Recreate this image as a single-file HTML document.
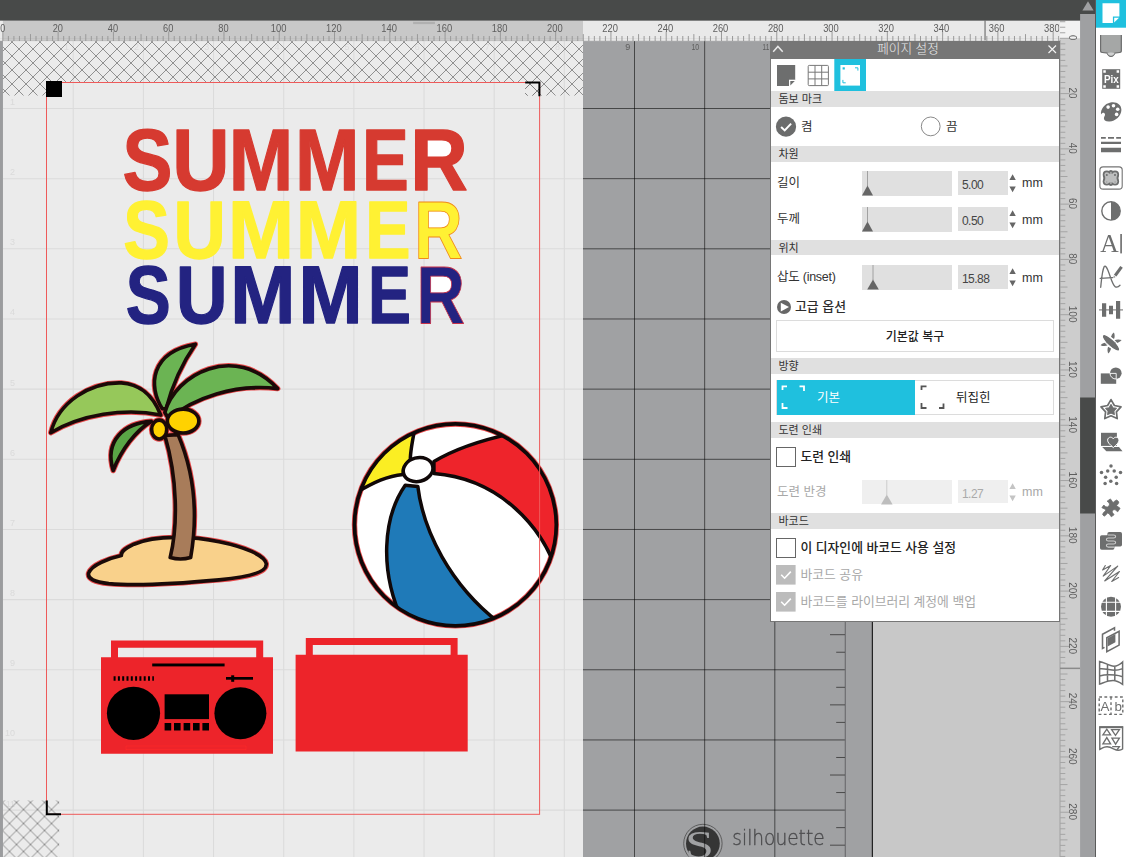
<!DOCTYPE html>
<html lang="ko"><head><meta charset="utf-8"><title>Silhouette Studio - 페이지 설정</title>
<style>
html,body{margin:0;padding:0;background:#c8c8c8;}
body{width:1126px;height:857px;overflow:hidden;position:relative;font-family:"Liberation Sans","Noto Sans CJK KR",sans-serif;}
#cv{position:absolute;left:0;top:0;will-change:transform;}
#tb{position:absolute;left:1096px;top:0;width:30px;height:857px;background:#fff;will-change:transform;}
#pn{position:absolute;left:770px;top:41px;width:288px;height:580px;background:#fff;border:1px solid #767676;border-top:none;font-size:12px;color:#333;}
#pn .ti{position:absolute;left:-1px;top:0;width:276px;height:17.5px;background:#767676;color:#ededed;font-size:12.6px;line-height:17px;text-align:center;font-weight:300;padding-right:14px;}
#pn .hd{position:absolute;left:0;width:288px;height:15.6px;background:#e0e0e0;font-size:11px;line-height:17px;color:#333;padding-left:7.5px;box-sizing:border-box;}
#pn .lb{position:absolute;left:6px;height:20px;line-height:20px;font-size:12.5px;white-space:nowrap;}
#pn .sl{position:absolute;left:91px;width:90px;height:24.6px;background:#e0e0e0;}
#pn .in{position:absolute;left:187px;width:50px;height:23.6px;background:#e0e0e0;font-size:12px;line-height:28px;padding-left:4px;box-sizing:border-box;color:#444;letter-spacing:-0.55px;}
#pn .mm{position:absolute;left:251px;font-size:12.5px;line-height:20px;height:20px;}
#pn .cb{position:absolute;left:5px;width:18px;height:18px;border:1px solid #666;background:#fff;}
#pn .dis{color:#a8a8a8;}
#pn svg{position:absolute;overflow:visible;}
</style></head><body>
<svg id="cv" width="1096" height="857" viewBox="0 0 1096 857" font-family="'Liberation Sans',sans-serif">
<defs>
<pattern id="h1" x="5" y="0" width="14" height="14" patternUnits="userSpaceOnUse"><path d="M0,7 L7,14 L14,7 L7,0 Z" fill="none" stroke="#787878" stroke-width="0.8"/></pattern>
<pattern id="h2" x="2.5" y="-2.5" width="14" height="14" patternUnits="userSpaceOnUse"><path d="M0,7 L7,14 L14,7 L7,0 Z" fill="none" stroke="#787878" stroke-width="0.8"/></pattern>
</defs>
<rect x="0" y="0" width="1096" height="857" fill="#c8c8c8"/>
<rect x="0" y="21" width="872" height="836" fill="#a0a1a3"/>
<rect x="871.8" y="21" width="1.1" height="836" fill="#111"/>
<g>
<circle cx="702.9" cy="843.5" r="19.2" fill="none" stroke="#4a4a4a" stroke-width="0.8"/>
<circle cx="702.9" cy="843.5" r="16.9" fill="#353535"/>
<text transform="translate(699.5,857.5) scale(1.3,1)" font-family="'Liberation Serif',serif" font-size="40" fill="#a0a1a3" text-anchor="middle">S</text>
<text x="732.3" y="844.8" font-family="'DejaVu Sans','Liberation Sans',sans-serif" font-weight="200" font-size="20.4" fill="#4a4a4c" stroke="#4a4a4c" stroke-width="0.35" textLength="92.3" lengthAdjust="spacingAndGlyphs">silhouette</text>
</g>
<path d="M634.5,40 V857 M704.66,40 V857 M774.82,40 V857" stroke="#000" stroke-width="1" fill="none" opacity="0.56"/>
<path d="M583,108.5 H845.3 M583,178.66 H845.3 M583,248.82 H845.3 M583,318.98 H845.3 M583,389.14 H845.3 M583,459.3 H845.3 M583,529.46 H845.3 M583,599.62 H845.3 M583,669.78 H845.3 M583,739.94 H845.3 M583,810.1 H845.3 M583,880.26 H845.3" stroke="#000" stroke-width="1" fill="none" opacity="0.56"/>
<path d="M845.3,40 V857" stroke="#6e6e70" stroke-width="1.2" fill="none"/>
<path d="M836.2,55.88 H845 M830,73.42 H845 M836.2,90.96 H845 M836.2,126.04 H845 M830,143.58 H845 M836.2,161.12 H845 M836.2,196.2 H845 M830,213.74 H845 M836.2,231.28 H845 M836.2,266.36 H845 M830,283.9 H845 M836.2,301.44 H845 M836.2,336.52 H845 M830,354.06 H845 M836.2,371.6 H845 M836.2,406.68 H845 M830,424.22 H845 M836.2,441.76 H845 M836.2,476.84 H845 M830,494.38 H845 M836.2,511.92 H845 M836.2,547 H845 M830,564.54 H845 M836.2,582.08 H845 M836.2,617.16 H845 M830,634.7 H845 M836.2,652.24 H845 M836.2,687.32 H845 M830,704.86 H845 M836.2,722.4 H845 M836.2,757.48 H845 M830,775.02 H845 M836.2,792.56 H845 M836.2,827.64 H845 M830,845.18 H845 M836.2,862.72 H845 M836.2,897.8 H845 M830,915.34 H845 M836.2,932.88 H845" stroke="#4a4a4a" stroke-width="1" fill="none"/>
<g font-size="9" fill="#5e5e5e" text-anchor="end"><text x="630.3" y="49.7">9</text><text x="699.2" y="49.7" textLength="7.8" lengthAdjust="spacingAndGlyphs">10</text><text x="769.2" y="49.7" textLength="6.6" lengthAdjust="spacingAndGlyphs">11</text></g>
<rect x="2.85" y="38.3" width="580.15" height="830" fill="#ebebeb"/>
<path d="M73.22,40 V857 M143.38,40 V857 M213.54,40 V857 M283.7,40 V857 M353.86,40 V857 M424.02,40 V857 M494.18,40 V857 M564.34,40 V857 M2.85,108.5 H583 M2.85,178.66 H583 M2.85,248.82 H583 M2.85,318.98 H583 M2.85,389.14 H583 M2.85,459.3 H583 M2.85,529.46 H583 M2.85,599.62 H583 M2.85,669.78 H583 M2.85,739.94 H583 M2.85,810.1 H583 M2.85,880.26 H583" stroke="#dbdbdb" stroke-width="1.05" fill="none"/>
<g font-size="9" fill="#dadada" text-anchor="end"><text x="68.92" y="49.7">1</text><text x="139.08" y="49.7">2</text><text x="209.24" y="49.7">3</text><text x="279.4" y="49.7">4</text><text x="349.56" y="49.7">5</text><text x="419.72" y="49.7">6</text><text x="489.88" y="49.7">7</text><text x="560.04" y="49.7">8</text><text x="15" y="105">1</text><text x="15" y="175.16">2</text><text x="15" y="245.32">3</text><text x="15" y="315.48">4</text><text x="15" y="385.64">5</text><text x="15" y="455.8">6</text><text x="15" y="525.96">7</text><text x="15" y="596.12">8</text><text x="15" y="666.28">9</text><text x="15" y="736.44">10</text><text x="15" y="806.6">11</text></g>
<path d="M2.7,41 H583 V95.6 H539.6 V82.5 H525.2 V95.6 H539.6 V82.5 H62 V95.6 H46.5 V95.6 H2.7 Z" fill="url(#h1)"/>
<path d="M525.2,82.5 H539.6 V95.6 H525.2 Z" fill="url(#h1)"/>
<rect x="2.7" y="800.4" width="56.5" height="57" fill="url(#h2)"/>
<g font-family="'Liberation Sans',sans-serif" font-weight="bold">
<rect x="423.77" y="135.91" width="31.11" height="24.25" fill="#fff"/><text aria-label="SUMMER" y="189.6" font-size="86.6" fill="#d63a30" stroke="#d63a30" stroke-width="1.3" stroke-linejoin="round"><tspan x="122.43" textLength="49.91" lengthAdjust="spacingAndGlyphs">S</tspan><tspan x="172.29" textLength="57.28" lengthAdjust="spacingAndGlyphs">U</tspan><tspan x="228.77" textLength="64.44" lengthAdjust="spacingAndGlyphs">M</tspan><tspan x="294.97" textLength="64.44" lengthAdjust="spacingAndGlyphs">M</tspan><tspan x="361.95" textLength="46.81" lengthAdjust="spacingAndGlyphs">E</tspan><tspan x="410.2" textLength="57.6" lengthAdjust="spacingAndGlyphs">R</tspan></text>
<rect x="425.67" y="207.98" width="26.18" height="22.68" fill="#fff"/><text aria-label="SUMMER" y="258.2" font-size="81" fill="#fff133" stroke="#fff133" stroke-width="1.3" stroke-linejoin="round"><tspan x="123.22" textLength="46.62" lengthAdjust="spacingAndGlyphs">S</tspan><tspan x="173.6" textLength="52.34" lengthAdjust="spacingAndGlyphs">U</tspan><tspan x="227.94" textLength="66" lengthAdjust="spacingAndGlyphs">M</tspan><tspan x="295.8" textLength="65.28" lengthAdjust="spacingAndGlyphs">M</tspan><tspan x="365.3" textLength="45.26" lengthAdjust="spacingAndGlyphs">E</tspan><tspan x="414.25" textLength="48.48" lengthAdjust="spacingAndGlyphs" stroke="#f08a1c" stroke-width="0.9">R</tspan></text>
<rect x="427.87" y="272.38" width="26.18" height="22.68" fill="#fff"/><text aria-label="SUMMER" y="322.6" font-size="81" fill="#232381" stroke="#232381" stroke-width="1.3" stroke-linejoin="round"><tspan x="125.8" textLength="44.95" lengthAdjust="spacingAndGlyphs">S</tspan><tspan x="175.97" textLength="51.5" lengthAdjust="spacingAndGlyphs">U</tspan><tspan x="230.31" textLength="65.16" lengthAdjust="spacingAndGlyphs">M</tspan><tspan x="298.5" textLength="64.09" lengthAdjust="spacingAndGlyphs">M</tspan><tspan x="368.03" textLength="43" lengthAdjust="spacingAndGlyphs">E</tspan><tspan x="416.45" textLength="48.48" lengthAdjust="spacingAndGlyphs" stroke="#c8324a" stroke-width="0.9">R</tspan></text>
</g>

<!-- palm tree -->
<defs><g id="palm">
<path d="M186,772 C195,745 250,725 290,716 C288,700 310,690 330,680 C400,650 520,655 600,672 C680,688 745,715 750,742 C752,770 690,785 600,793 C470,805 330,812 250,805 C205,800 182,790 186,772 Z" fill="#f9d18b"/>
<path d="M445,722 C470,620 468,470 428,335 L470,332 C520,450 535,580 510,722 C490,728 465,728 445,722 Z" fill="#a87c5a"/>
<path d="M66,326 C90,230 190,165 290,168 C340,172 385,195 415,270 C300,245 160,270 66,326 Z" fill="#96c85a"/>
<path d="M385,290 C300,295 235,350 264,446 C290,380 335,320 385,290 Z" fill="#5aa646"/>
<path d="M420,250 C375,180 380,70 525,45 C480,110 450,180 432,250 Z" fill="#6bb453"/>
<path d="M428,262 C460,140 650,40 786,186 C650,170 520,215 440,282 Z" fill="#6bb453"/>
<ellipse cx="486" cy="289" rx="50" ry="38" fill="#ffd200"/>
<ellipse cx="410" cy="316" rx="24" ry="30" fill="#ffd200"/>
</g></defs>
<g transform="translate(30,330) scale(0.31505)" stroke-linejoin="round" stroke-linecap="round">
<use href="#palm" stroke="#e8484a" stroke-width="17.5"/>
<use href="#palm" stroke="#1a0a08" stroke-width="11.5"/>
</g>
<!-- beach ball -->
<clipPath id="bc"><circle cx="430" cy="428" r="376"/></clipPath>
<g transform="translate(340,410) scale(0.26838)" stroke="#100808" stroke-width="13" stroke-linejoin="round">
<circle cx="430" cy="428" r="376" fill="#fff" stroke="#e8484a" stroke-width="20"/>
<g clip-path="url(#bc)">
<path d="M40,320 L20,60 L285,40 C270,110 262,150 262,185 C245,200 235,220 235,240 C180,245 130,265 40,320 Z" fill="#fbee23"/>
<path d="M350,192 C420,150 500,118 640,88 L860,120 L820,640 C760,420 580,255 350,237 Z" fill="#ee242b"/>
<path d="M243,280 C160,400 145,600 235,790 L600,840 L590,790 C410,650 310,450 290,285 Z" fill="#1f7ab8"/>
</g>
<circle cx="430" cy="428" r="376" fill="none" stroke-width="14"/>
<ellipse cx="291" cy="222" rx="56" ry="44" transform="rotate(-15 291 222)" fill="#fff"/>
</g>
<!-- boombox 1 -->
<g fill="#ed242a">
<path d="M111,640.6 H263.2 V657.3 H273 V753.8 H101 V657.3 H111 Z M118,647.7 V657.3 H256.2 V647.7 Z" fill-rule="evenodd"/>
<path d="M305.8,638 H457.6 V654.8 H467.7 V751.6 H295.6 V654.8 H305.8 Z M312.8,645 V654.8 H450.6 V645 Z" fill-rule="evenodd"/>
</g>
<g fill="#000">
<rect x="152.2" y="663.5" width="72.4" height="2.9"/>
<path d="M113.6,676.2h2v4.6h-2z M117.9,676.2h2v4.6h-2z M122.2,676.2h2v4.6h-2z M126.5,676.2h2v4.6h-2z M130.8,676.2h2v4.6h-2z M135.1,676.2h2v4.6h-2z M139.4,676.2h2v4.6h-2z M143.7,676.2h2v4.6h-2z M148,676.2h2v4.6h-2z M152.3,676.2h1.6v4.6h-1.6z"/>
<rect x="226" y="677" width="27" height="2.7"/>
<rect x="231.2" y="675.3" width="3" height="6.5"/>
<circle cx="133.5" cy="713.3" r="26.6"/>
<circle cx="240.4" cy="713.3" r="26"/>
<rect x="164.6" y="694.3" width="44.4" height="24.8"/>
<path d="M164.6,723h6.6v7.5h-6.6z M174,723h6.6v7.5h-6.6z M183.6,723h6.6v7.5h-6.6z M193,723h6.6v7.5h-6.6z M202.4,723h6.6v7.5h-6.6z"/>
</g>
<rect x="126" y="746" width="120" height="3.7" fill="none" stroke="#ff2a2a" stroke-width="0.6"/>
<rect x="46.5" y="82.5" width="493.1" height="731.8" fill="none" stroke="#ee5a5a" stroke-width="1"/>
<rect x="46" y="81" width="16" height="16" fill="#000"/>
<path d="M525.2,82.6 H539.4 V96.3" fill="none" stroke="#000" stroke-width="2"/>
<path d="M46.8,800.4 V814.2 H61" fill="none" stroke="#000" stroke-width="2"/>
<rect x="0" y="20.5" width="1060" height="20.6" fill="#e9e9e9"/>
<rect x="2.85" y="20.5" width="580.15" height="20.6" fill="#c8c8c8"/>
<rect x="0" y="20.5" width="2.5" height="20.6" fill="#ebebeb"/>
<rect x="0" y="41.1" width="2.8" height="817" fill="#9b9c9e"/>
<path d="M2.85,31.5 V41 M8.38,36 V41 M13.91,36 V41 M19.43,36 V41 M24.96,36 V41 M30.49,34.1 V41 M36.02,36 V41 M41.55,36 V41 M47.07,36 V41 M52.6,36 V41 M58.13,31.5 V41 M63.66,36 V41 M69.19,36 V41 M74.71,36 V41 M80.24,36 V41 M85.77,34.1 V41 M91.3,36 V41 M96.83,36 V41 M102.35,36 V41 M107.88,36 V41 M113.41,31.5 V41 M118.94,36 V41 M124.47,36 V41 M129.99,36 V41 M135.52,36 V41 M141.05,34.1 V41 M146.58,36 V41 M152.11,36 V41 M157.63,36 V41 M163.16,36 V41 M168.69,31.5 V41 M174.22,36 V41 M179.75,36 V41 M185.27,36 V41 M190.8,36 V41 M196.33,34.1 V41 M201.86,36 V41 M207.39,36 V41 M212.91,36 V41 M218.44,36 V41 M223.97,31.5 V41 M229.5,36 V41 M235.03,36 V41 M240.55,36 V41 M246.08,36 V41 M251.61,34.1 V41 M257.14,36 V41 M262.67,36 V41 M268.19,36 V41 M273.72,36 V41 M279.25,31.5 V41 M284.78,36 V41 M290.31,36 V41 M295.83,36 V41 M301.36,36 V41 M306.89,34.1 V41 M312.42,36 V41 M317.95,36 V41 M323.47,36 V41 M329,36 V41 M334.53,31.5 V41 M340.06,36 V41 M345.59,36 V41 M351.11,36 V41 M356.64,36 V41 M362.17,34.1 V41 M367.7,36 V41 M373.23,36 V41 M378.75,36 V41 M384.28,36 V41 M389.81,31.5 V41 M395.34,36 V41 M400.87,36 V41 M406.39,36 V41 M411.92,36 V41 M417.45,34.1 V41 M422.98,36 V41 M428.51,36 V41 M434.03,36 V41 M439.56,36 V41 M445.09,31.5 V41 M450.62,36 V41 M456.15,36 V41 M461.67,36 V41 M467.2,36 V41 M472.73,34.1 V41 M478.26,36 V41 M483.79,36 V41 M489.31,36 V41 M494.84,36 V41 M500.37,31.5 V41 M505.9,36 V41 M511.43,36 V41 M516.95,36 V41 M522.48,36 V41 M528.01,34.1 V41 M533.54,36 V41 M539.07,36 V41 M544.59,36 V41 M550.12,36 V41 M555.65,31.5 V41 M561.18,36 V41 M566.71,36 V41 M572.23,36 V41 M577.76,36 V41 M583.29,34.1 V41 M588.82,36 V41 M594.35,36 V41 M599.87,36 V41 M605.4,36 V41 M610.93,31.5 V41 M616.46,36 V41 M621.99,36 V41 M627.51,36 V41 M633.04,36 V41 M638.57,34.1 V41 M644.1,36 V41 M649.63,36 V41 M655.15,36 V41 M660.68,36 V41 M666.21,31.5 V41 M671.74,36 V41 M677.27,36 V41 M682.79,36 V41 M688.32,36 V41 M693.85,34.1 V41 M699.38,36 V41 M704.91,36 V41 M710.43,36 V41 M715.96,36 V41 M721.49,31.5 V41 M727.02,36 V41 M732.55,36 V41 M738.07,36 V41 M743.6,36 V41 M749.13,34.1 V41 M754.66,36 V41 M760.19,36 V41 M765.71,36 V41 M771.24,36 V41 M776.77,31.5 V41 M782.3,36 V41 M787.83,36 V41 M793.35,36 V41 M798.88,36 V41 M804.41,34.1 V41 M809.94,36 V41 M815.47,36 V41 M820.99,36 V41 M826.52,36 V41 M832.05,31.5 V41 M837.58,36 V41 M843.11,36 V41 M848.63,36 V41 M854.16,36 V41 M859.69,34.1 V41 M865.22,36 V41 M870.75,36 V41 M876.27,36 V41 M881.8,36 V41 M887.33,31.5 V41 M892.86,36 V41 M898.39,36 V41 M903.91,36 V41 M909.44,36 V41 M914.97,34.1 V41 M920.5,36 V41 M926.03,36 V41 M931.55,36 V41 M937.08,36 V41 M942.61,31.5 V41 M948.14,36 V41 M953.67,36 V41 M959.19,36 V41 M964.72,36 V41 M970.25,34.1 V41 M975.78,36 V41 M981.31,36 V41 M986.83,36 V41 M992.36,36 V41 M997.89,31.5 V41 M1003.42,36 V41 M1008.95,36 V41 M1014.47,36 V41 M1020,36 V41 M1025.53,34.1 V41 M1031.06,36 V41 M1036.59,36 V41 M1042.11,36 V41 M1047.64,36 V41 M1053.17,31.5 V41 M1058.7,36 V41" stroke="#9a9a9a" stroke-width="1" fill="none"/>
<rect x="0" y="38" width="1060" height="0.9" fill="#888" opacity="0.12"/>
<rect x="0" y="40.5" width="1060" height="0.6" fill="#888" opacity="0.25"/>
<g font-size="10.6" fill="#5e5e5e" text-anchor="middle"><text x="0.3" y="31.8" text-anchor="start" textLength="5" lengthAdjust="spacingAndGlyphs">0</text><text x="57.78" y="31.8" textLength="10.3" lengthAdjust="spacingAndGlyphs">20</text><text x="113" y="31.8" textLength="10.3" lengthAdjust="spacingAndGlyphs">40</text><text x="168.23" y="31.8" textLength="10.3" lengthAdjust="spacingAndGlyphs">60</text><text x="223.46" y="31.8" textLength="10.3" lengthAdjust="spacingAndGlyphs">80</text><text x="278.69" y="31.8" textLength="15.65" lengthAdjust="spacingAndGlyphs">100</text><text x="333.91" y="31.8" textLength="15.65" lengthAdjust="spacingAndGlyphs">120</text><text x="389.14" y="31.8" textLength="15.65" lengthAdjust="spacingAndGlyphs">140</text><text x="444.37" y="31.8" textLength="15.65" lengthAdjust="spacingAndGlyphs">160</text><text x="499.6" y="31.8" textLength="15.65" lengthAdjust="spacingAndGlyphs">180</text><text x="554.82" y="31.8" textLength="15.65" lengthAdjust="spacingAndGlyphs">200</text><text x="610.05" y="31.8" textLength="15.65" lengthAdjust="spacingAndGlyphs">220</text><text x="665.28" y="31.8" textLength="15.65" lengthAdjust="spacingAndGlyphs">240</text><text x="720.51" y="31.8" textLength="15.65" lengthAdjust="spacingAndGlyphs">260</text><text x="775.73" y="31.8" textLength="15.65" lengthAdjust="spacingAndGlyphs">280</text><text x="830.96" y="31.8" textLength="15.65" lengthAdjust="spacingAndGlyphs">300</text><text x="886.19" y="31.8" textLength="15.65" lengthAdjust="spacingAndGlyphs">320</text><text x="941.42" y="31.8" textLength="15.65" lengthAdjust="spacingAndGlyphs">340</text><text x="996.64" y="31.8" textLength="15.65" lengthAdjust="spacingAndGlyphs">360</text><text x="1051.87" y="31.8" textLength="15.65" lengthAdjust="spacingAndGlyphs">380</text></g>
<rect x="1059.4" y="20.5" width="20.7" height="837" fill="#cdcdcd"/>
<rect x="1059.4" y="20.5" width="20.7" height="17.8" fill="#f2f2f2"/>
<rect x="1059.4" y="40" width="1.2" height="817" fill="#a8a8a8"/>
<path d="M1060,21.72 H1065.3 M1060,27.24 H1065.3 M1060,32.77 H1065.3 M1060,38.3 H1069.5 M1060,43.83 H1065.3 M1060,49.36 H1065.3 M1060,54.88 H1065.3 M1060,60.41 H1065.3 M1060,65.94 H1067.5 M1060,71.47 H1065.3 M1060,77 H1065.3 M1060,82.52 H1065.3 M1060,88.05 H1065.3 M1060,93.58 H1069.5 M1060,99.11 H1065.3 M1060,104.64 H1065.3 M1060,110.16 H1065.3 M1060,115.69 H1065.3 M1060,121.22 H1067.5 M1060,126.75 H1065.3 M1060,132.28 H1065.3 M1060,137.8 H1065.3 M1060,143.33 H1065.3 M1060,148.86 H1069.5 M1060,154.39 H1065.3 M1060,159.92 H1065.3 M1060,165.44 H1065.3 M1060,170.97 H1065.3 M1060,176.5 H1067.5 M1060,182.03 H1065.3 M1060,187.56 H1065.3 M1060,193.08 H1065.3 M1060,198.61 H1065.3 M1060,204.14 H1069.5 M1060,209.67 H1065.3 M1060,215.2 H1065.3 M1060,220.72 H1065.3 M1060,226.25 H1065.3 M1060,231.78 H1067.5 M1060,237.31 H1065.3 M1060,242.84 H1065.3 M1060,248.36 H1065.3 M1060,253.89 H1065.3 M1060,259.42 H1069.5 M1060,264.95 H1065.3 M1060,270.48 H1065.3 M1060,276 H1065.3 M1060,281.53 H1065.3 M1060,287.06 H1067.5 M1060,292.59 H1065.3 M1060,298.12 H1065.3 M1060,303.64 H1065.3 M1060,309.17 H1065.3 M1060,314.7 H1069.5 M1060,320.23 H1065.3 M1060,325.76 H1065.3 M1060,331.28 H1065.3 M1060,336.81 H1065.3 M1060,342.34 H1067.5 M1060,347.87 H1065.3 M1060,353.4 H1065.3 M1060,358.92 H1065.3 M1060,364.45 H1065.3 M1060,369.98 H1069.5 M1060,375.51 H1065.3 M1060,381.04 H1065.3 M1060,386.56 H1065.3 M1060,392.09 H1065.3 M1060,397.62 H1067.5 M1060,403.15 H1065.3 M1060,408.68 H1065.3 M1060,414.2 H1065.3 M1060,419.73 H1065.3 M1060,425.26 H1069.5 M1060,430.79 H1065.3 M1060,436.32 H1065.3 M1060,441.84 H1065.3 M1060,447.37 H1065.3 M1060,452.9 H1067.5 M1060,458.43 H1065.3 M1060,463.96 H1065.3 M1060,469.48 H1065.3 M1060,475.01 H1065.3 M1060,480.54 H1069.5 M1060,486.07 H1065.3 M1060,491.6 H1065.3 M1060,497.12 H1065.3 M1060,502.65 H1065.3 M1060,508.18 H1067.5 M1060,513.71 H1065.3 M1060,519.24 H1065.3 M1060,524.76 H1065.3 M1060,530.29 H1065.3 M1060,535.82 H1069.5 M1060,541.35 H1065.3 M1060,546.88 H1065.3 M1060,552.4 H1065.3 M1060,557.93 H1065.3 M1060,563.46 H1067.5 M1060,568.99 H1065.3 M1060,574.52 H1065.3 M1060,580.04 H1065.3 M1060,585.57 H1065.3 M1060,591.1 H1069.5 M1060,596.63 H1065.3 M1060,602.16 H1065.3 M1060,607.68 H1065.3 M1060,613.21 H1065.3 M1060,618.74 H1067.5 M1060,624.27 H1065.3 M1060,629.8 H1065.3 M1060,635.32 H1065.3 M1060,640.85 H1065.3 M1060,646.38 H1069.5 M1060,651.91 H1065.3 M1060,657.44 H1065.3 M1060,662.96 H1065.3 M1060,668.49 H1065.3 M1060,674.02 H1067.5 M1060,679.55 H1065.3 M1060,685.08 H1065.3 M1060,690.6 H1065.3 M1060,696.13 H1065.3 M1060,701.66 H1069.5 M1060,707.19 H1065.3 M1060,712.72 H1065.3 M1060,718.24 H1065.3 M1060,723.77 H1065.3 M1060,729.3 H1067.5 M1060,734.83 H1065.3 M1060,740.36 H1065.3 M1060,745.88 H1065.3 M1060,751.41 H1065.3 M1060,756.94 H1069.5 M1060,762.47 H1065.3 M1060,768 H1065.3 M1060,773.52 H1065.3 M1060,779.05 H1065.3 M1060,784.58 H1067.5 M1060,790.11 H1065.3 M1060,795.64 H1065.3 M1060,801.16 H1065.3 M1060,806.69 H1065.3 M1060,812.22 H1069.5 M1060,817.75 H1065.3 M1060,823.28 H1065.3 M1060,828.8 H1065.3 M1060,834.33 H1065.3 M1060,839.86 H1067.5 M1060,845.39 H1065.3 M1060,850.92 H1065.3 M1060,856.44 H1065.3" stroke="#a4a4a4" stroke-width="1" fill="none"/>
<g font-size="10.6" fill="#5e5e5e" text-anchor="middle"><text transform="translate(1068.9,37.7) rotate(90)" textLength="5.25" lengthAdjust="spacingAndGlyphs">0</text><text transform="translate(1068.9,92.98) rotate(90)" textLength="11" lengthAdjust="spacingAndGlyphs">20</text><text transform="translate(1068.9,148.26) rotate(90)" textLength="11" lengthAdjust="spacingAndGlyphs">40</text><text transform="translate(1068.9,203.54) rotate(90)" textLength="11" lengthAdjust="spacingAndGlyphs">60</text><text transform="translate(1068.9,258.82) rotate(90)" textLength="11" lengthAdjust="spacingAndGlyphs">80</text><text transform="translate(1068.9,314.1) rotate(90)" textLength="16.75" lengthAdjust="spacingAndGlyphs">100</text><text transform="translate(1068.9,369.38) rotate(90)" textLength="16.75" lengthAdjust="spacingAndGlyphs">120</text><text transform="translate(1068.9,424.66) rotate(90)" textLength="16.75" lengthAdjust="spacingAndGlyphs">140</text><text transform="translate(1068.9,479.94) rotate(90)" textLength="16.75" lengthAdjust="spacingAndGlyphs">160</text><text transform="translate(1068.9,535.22) rotate(90)" textLength="16.75" lengthAdjust="spacingAndGlyphs">180</text><text transform="translate(1068.9,590.5) rotate(90)" textLength="16.75" lengthAdjust="spacingAndGlyphs">200</text><text transform="translate(1068.9,645.78) rotate(90)" textLength="16.75" lengthAdjust="spacingAndGlyphs">220</text><text transform="translate(1068.9,701.06) rotate(90)" textLength="16.75" lengthAdjust="spacingAndGlyphs">240</text><text transform="translate(1068.9,756.34) rotate(90)" textLength="16.75" lengthAdjust="spacingAndGlyphs">260</text><text transform="translate(1068.9,811.62) rotate(90)" textLength="16.75" lengthAdjust="spacingAndGlyphs">280</text></g>
<rect x="1060" y="667.6" width="20.1" height="1.5" fill="#8a8a8a"/>
<rect x="984.3" y="20.6" width="1.5" height="19.8" fill="#8a8a8a"/>
<rect x="413.1" y="21.8" width="21.8" height="2.3" fill="#b0b0b0"/>
<rect x="0" y="0" width="1096" height="20.6" fill="#484a49"/>
<rect x="1080.1" y="14" width="15" height="843" fill="#9fa0a2"/>
<rect x="1080.1" y="0" width="15" height="14" fill="#484a49"/>
<path d="M1082.4,10.6 L1088,1.3 L1093.6,10.6 Z" fill="#9fa0a2"/>
<rect x="1080.1" y="397.5" width="15" height="116" fill="#484a49"/>
<rect x="1095" y="0" width="1" height="857" fill="#5a5b5b"/>
</svg>
<div id="pn">
<div class="ti">페이지 설정</div>
<svg style="left:0;top:0" width="288" height="18"><path d="M2.2,10.7 L6.9,5.4 L11.7,10.7" fill="none" stroke="#e8e8e8" stroke-width="1.5"/><path d="M277.5,4.5 L285,12 M285,4.5 L277.5,12" fill="none" stroke="#f2f2f2" stroke-width="1.2"/></svg>
<!-- icon row -->
<svg style="left:0;top:17.5px" width="288" height="33">
<path d="M6,6 H24.2 V20.7 L18,27 H6 Z" fill="#6d6e6e"/><path d="M18.8,21.3 H24.2 L18.8,26.8 Z" fill="#6d6e6e"/>
<path d="M18,20.7 H24.2 V27 H18 Z" fill="#fff"/><path d="M19.3,22 H23.8 L19.3,26.6 Z" fill="#6d6e6e"/>
<g fill="none" stroke="#787878" stroke-width="1"><rect x="37.2" y="6.4" width="20.2" height="20.2" rx="1"/><path d="M44,6.4 V26.6 M50.7,6.4 V26.6 M37.2,13.2 H57.4 M37.2,19.9 H57.4"/></g>
<rect x="63.3" y="0" width="31.7" height="32.5" fill="#1fc0de"/>
<rect x="69.4" y="6" width="19.6" height="20.6" fill="#fff"/>
<rect x="71.6" y="8.3" width="2.2" height="2.2" fill="#1fc0de"/>
<path d="M84,8.8 H86.9 V11.6 M71.9,20.9 V23.8 H74.7" fill="none" stroke="#1fc0de" stroke-width="1"/>
</svg>
<div class="hd" style="top:50px">돔보 마크</div>
<!-- radio row -->
<svg style="left:0;top:66px" width="288" height="40">
<circle cx="15" cy="19.7" r="10.1" fill="#6b6c6c"/><path d="M10.1,20 L13.7,23.4 L20.1,16.6" fill="none" stroke="#fff" stroke-width="2"/>
<circle cx="159.7" cy="19.4" r="9.4" fill="#fff" stroke="#8a8a8a" stroke-width="1"/>
</svg>
<div class="lb" style="left:30px;top:75.5px">켬</div>
<div class="lb" style="left:175px;top:75.5px">끔</div>
<div class="hd" style="top:105.2px">차원</div>
<!-- 길이 -->
<div class="lb" style="top:131.5px">길이</div>
<div class="sl" style="top:130px"><svg width="90" height="25"><path d="M5.5,0 V15" stroke="#9a9a9a" stroke-width="0.9"/><path d="M0,24.6 L5.5,14.4 L11,24.6 Z" fill="#666"/></svg></div>
<div class="in" style="top:130px">5.00</div>
<svg style="left:237.3px;top:130px" width="10" height="25"><path d="M1.4,9 L4.6,3.2 L7.8,9 Z M1.4,15.5 L4.6,21.3 L7.8,15.5 Z" fill="#666"/></svg>
<div class="mm" style="top:132px">mm</div>
<!-- 두께 -->
<div class="lb" style="top:168px">두께</div>
<div class="sl" style="top:166px"><svg width="90" height="25"><path d="M5.5,0 V15" stroke="#9a9a9a" stroke-width="0.9"/><path d="M0,24.6 L5.5,14.4 L11,24.6 Z" fill="#666"/></svg></div>
<div class="in" style="top:166px">0.50</div>
<svg style="left:237.3px;top:166px" width="10" height="25"><path d="M1.4,9 L4.6,3.2 L7.8,9 Z M1.4,15.5 L4.6,21.3 L7.8,15.5 Z" fill="#666"/></svg>
<div class="mm" style="top:168.5px">mm</div>
<div class="hd" style="top:198.6px">위치</div>
<!-- 삽도 -->
<div class="lb" style="top:226px;letter-spacing:-0.25px">삽도 (inset)</div>
<div class="sl" style="top:224px"><svg width="90" height="25"><path d="M11,0 V15" stroke="#9a9a9a" stroke-width="0.9"/><path d="M5.2,24.6 L11,14.4 L16.8,24.6 Z" fill="#666"/></svg></div>
<div class="in" style="top:224px">15.88</div>
<svg style="left:237.3px;top:224px" width="10" height="25"><path d="M1.4,9 L4.6,3.2 L7.8,9 Z M1.4,15.5 L4.6,21.3 L7.8,15.5 Z" fill="#666"/></svg>
<div class="mm" style="top:226.5px">mm</div>
<!-- advanced -->
<svg style="left:0;top:256px" width="40" height="20"><circle cx="13" cy="10" r="7" fill="#676767"/><path d="M9.8,5.8 L18,10.1 L9.8,14.4 Z" fill="#fff"/></svg>
<div class="lb" style="left:24px;top:255.5px;font-size:12.9px;color:#2e2e2e;font-weight:500">고급 옵션</div>
<div style="position:absolute;left:5px;top:279px;width:278px;height:31.5px;border:1px solid #dcdcdc;box-sizing:border-box;text-align:center;line-height:33px;font-size:12px;color:#222;font-weight:500">기본값 복구</div>
<div class="hd" style="top:317px">방향</div>
<!-- orientation toggle -->
<div style="position:absolute;left:5px;top:339.3px;width:277.5px;height:35px;border:1px solid #dcdcdc;box-sizing:border-box;background:#fff"></div>
<div style="position:absolute;left:5.5px;top:339.3px;width:138.5px;height:35px;background:#1fc0de"></div>
<svg style="left:0;top:339.3px" width="288" height="35">
<path d="M11.5,10 V6.4 H16 M28.5,6.4 H33 V11 M11.5,23 V28 H16.5" fill="none" stroke="#fff" stroke-width="1.8"/>
<path d="M150.5,10 V6.4 H155.5 M150.5,23 V28 H155.5 M168,28 H172.5 V23.5" fill="none" stroke="#555" stroke-width="1.8"/>
</svg>
<div class="lb" style="left:46px;top:347px;color:#fff">기본</div>
<div class="lb" style="left:185px;top:347px;color:#222">뒤집힌</div>
<div class="hd" style="top:381.2px">도련 인쇄</div>
<div class="cb" style="top:405.7px"></div>
<div class="lb" style="left:29.5px;top:405.5px;font-size:12.8px;font-weight:500;color:#222">도련 인쇄</div>
<!-- 도련 반경 -->
<div class="lb dis" style="top:440.5px">도련 반경</div>
<div class="sl" style="top:438.7px;background:#efefef"><svg width="90" height="25"><path d="M24.8,0 V15" stroke="#ccc" stroke-width="1"/><path d="M19,24.6 L24.8,14.4 L30.6,24.6 Z" fill="#bdbdbd"/></svg></div>
<div class="in dis" style="top:438.7px;background:#efefef;color:#aaa">1.27</div>
<svg style="left:237.3px;top:438.7px" width="10" height="25"><path d="M1.4,9 L4.6,3.2 L7.8,9 Z M1.4,15.5 L4.6,21.3 L7.8,15.5 Z" fill="#c4c4c4"/></svg>
<div class="mm dis" style="top:440.5px">mm</div>
<div class="hd" style="top:472px">바코드</div>
<div class="cb" style="top:497.4px"></div>
<div class="lb" style="left:29.5px;top:497px;font-size:12.8px;font-weight:500;color:#222">이 디자인에 바코드 사용 설정</div>
<svg style="left:0;top:524px" width="30" height="50"><rect x="5" y="0" width="19.6" height="19.6" fill="#bcbcbc"/><path d="M10.2,9.8 L13.6,13.2 L19.8,6.6" fill="none" stroke="#fff" stroke-width="1.6"/><rect x="5" y="27" width="19.6" height="19.6" fill="#bcbcbc"/><path d="M10.2,36.8 L13.6,40.2 L19.8,33.6" fill="none" stroke="#fff" stroke-width="1.6"/></svg>
<div class="lb dis" style="left:29.5px;top:524px;font-size:12.8px">바코드 공유</div>
<div class="lb dis" style="left:29.5px;top:551px;font-size:12.8px">바코드를 라이브러리 계정에 백업</div>
</div>
<svg id="tb" width="30" height="857" viewBox="1096 0 30 857" font-family="'Liberation Sans',sans-serif">
<rect x="1096" y="0" width="30" height="857" fill="#fff"/>
<!-- 1 page (selected) -->
<rect x="1096" y="0" width="30" height="27.7" fill="#1fc0de"/>
<path d="M1102.5,3.2 H1119.4 V16.4 H1112.9 V22.9 H1102.5 Z" fill="#fff"/>
<path d="M1114.2,17.7 H1119 L1114.2,22.6 Z" fill="#fff"/>
<!-- 2 cutting mat -->
<path d="M1100,34.9 H1121.9 V51 Q1121.9,52.6 1119.5,52.9 L1115.3,53.2 Q1113.5,56.9 1111,56.9 Q1108.4,56.9 1106.7,53.2 L1102.4,52.9 Q1100,52.6 1100,51 Z" fill="#a5a7a6"/>
<path d="M1100.6,34.9 V51 Q1100.6,52.3 1102.4,52.5 L1107,53 Q1108.6,56.3 1111,56.3 Q1113.4,56.3 1115,53 L1119.5,52.5 Q1121.3,52.3 1121.3,51 V34.9" fill="none" stroke="#6d6e6e" stroke-width="1.2"/>
<path d="M1107.3,53.2 Q1111,51.6 1114.7,53.2 Q1113.3,55.8 1111,55.8 Q1108.7,55.8 1107.3,53.2 Z" fill="#d0d1d1"/>
<!-- 3 Pix -->
<rect x="1102.2" y="69.2" width="18" height="19.6" fill="#6d6e6e"/>
<path d="M1103.3,70.3h2.5v2.5h-2.5z M1116.6,70.3h2.5v2.5h-2.5z M1103.3,85.2h2.5v2.5h-2.5z M1116.6,85.2h2.5v2.5h-2.5z" fill="#fff"/>
<text x="1111.3" y="83" font-size="11" font-weight="bold" fill="#fff" text-anchor="middle" textLength="14.8" lengthAdjust="spacingAndGlyphs">Pix</text>
<!-- 4 palette -->
<path d="M1101,114.6 C1100.4,109 1104.5,103.6 1110.5,102.4 C1116.5,101.2 1121.6,104.5 1121.4,110 C1121.2,116 1115.5,121.2 1109.5,121.5 C1105.5,121.7 1103.6,120 1103.9,118 C1104.2,116.2 1105.6,115.2 1104.8,113.7 C1104,112.3 1102.2,112.6 1101,114.6 Z" fill="#6d6e6e"/>
<g fill="#fff"><circle cx="1108.1" cy="107.1" r="1.8"/><circle cx="1113.5" cy="105.8" r="1.8"/><circle cx="1117.7" cy="109.2" r="1.8"/><circle cx="1116.6" cy="114.4" r="1.8"/></g>
<!-- 5 lines -->
<path d="M1101,136.9h4.8v1.9h-4.8z M1108,136.9h6v1.9h-6z M1116.2,136.9h4.8v1.9h-4.8z M1101,141.7h20v2.4h-20z M1101,147.8h20v4.4h-20z" fill="#6d6e6e"/>
<!-- 6 rounded rect + blob -->
<rect x="1099.9" y="166.9" width="22.3" height="22.2" rx="3.2" fill="#fff" stroke="#747474" stroke-width="1.1"/>
<g fill="#6d6e6e"><circle cx="1106.8" cy="174.7" r="4.1"/><circle cx="1115" cy="174.7" r="4.1"/><circle cx="1106.8" cy="181.5" r="4.1"/><circle cx="1115" cy="181.5" r="4.1"/><rect x="1103.3" y="174.7" width="15.2" height="6.8"/><rect x="1106.8" y="172.4" width="8.2" height="11.4"/><circle cx="1110.9" cy="172.1" r="2.2"/><circle cx="1110.9" cy="183.8" r="2.2"/></g>
<g fill="#bdbebe"><circle cx="1106.8" cy="174.7" r="2.4"/><circle cx="1115" cy="174.7" r="2.4"/><circle cx="1106.8" cy="181.5" r="2.4"/><circle cx="1115" cy="181.5" r="2.4"/><rect x="1105.2" y="175.4" width="11.4" height="5.4"/><rect x="1107.6" y="173.6" width="6.6" height="9"/><circle cx="1110.9" cy="172.9" r="0.8"/><circle cx="1110.9" cy="183.2" r="0.8"/></g>
<g fill="#6d6e6e"><circle cx="1106.8" cy="175" r="1.05"/><circle cx="1115" cy="175" r="1.05"/></g>
<g fill="#9a9b9b"><circle cx="1106.7" cy="182" r="0.7"/><circle cx="1115.1" cy="182" r="0.7"/></g>
<!-- 7 half circle -->
<circle cx="1111" cy="210.9" r="9.2" fill="#fff" stroke="#6d6e6e" stroke-width="1.4"/>
<path d="M1111,201.7 A9.2,9.2 0 0 1 1111,220.1 Z" fill="#6d6e6e"/>
<!-- 8 A| -->
<text x="1109.5" y="252.4" font-family="'Liberation Serif',serif" font-size="25.5" fill="#6d6e6e" text-anchor="middle">A</text>
<rect x="1120.2" y="234" width="1.8" height="19.4" fill="#7a7a7a"/>
<!-- 9 A pencil -->
<path d="M1100.7,287.3 C1101.5,280 1102,271 1104.3,266.4 C1105.2,265.4 1106.6,267 1108,270.5 C1110.5,276.5 1112,284 1115,286.6 C1116.6,287.7 1118.6,286.9 1120,285.3 M1100.2,278.4 L1112.6,277.6" fill="none" stroke="#6d6e6e" stroke-width="1.3" stroke-linecap="round"/>
<path d="M1120.3,266 L1122.8,267.8 L1116.4,276.6 L1113.9,274.8 Z" fill="#6d6e6e"/>
<path d="M1113.7,275.6 L1115.7,277.1 L1113.4,278.2 Z" fill="#9a9a9a"/>
<!-- 10 align -->
<rect x="1099" y="309" width="24" height="1.7" fill="#a8a8a8"/>
<path d="M1102,303.2h4.2v13.6h-4.2z M1109,305.7h4v8.5h-4z M1116,301h4.2v17.8h-4.2z" fill="#6d6e6e"/>
<!-- 11 replicate -->
<g fill="#6d6e6e">
<ellipse cx="1111" cy="342.8" rx="10.8" ry="3" transform="rotate(43 1111 342.8)"/>
<path d="M1110.9,337.6 C1111.2,335 1112.6,333.2 1113.9,332.4 C1114.9,334.4 1114.9,336.8 1114,338.9 Z"/>
<path d="M1114.2,340.2 C1116.4,339.2 1119.4,339.2 1121.6,339.9 C1120.2,341.8 1117.6,343 1115.4,343 Z"/>
<path d="M1107.8,345.3 C1105.6,346.4 1102.8,346.3 1100.6,345.2 C1102,343.4 1104.6,342.4 1106.8,342.5 Z"/>
<path d="M1111,348.2 C1110.8,350.4 1109.6,352.4 1108.2,353.4 C1107.3,351.4 1107.2,349 1108.1,346.8 Z"/>
</g>
<ellipse cx="1111" cy="342.8" rx="11.9" ry="4" transform="rotate(43 1111 342.8)" fill="none" stroke="#fff" stroke-width="1"/>
<!-- 12 modify -->
<rect x="1100.8" y="373.4" width="15.4" height="10.4" fill="#6d6e6e"/>
<circle cx="1115.8" cy="373.2" r="5.8" fill="#6d6e6e"/>
<path d="M1110,373.4 H1116.2 V379 A5.8,5.8 0 0 1 1110,373.4 Z" fill="#6d6e6e" stroke="#fff" stroke-width="0.9"/>
<!-- 13 star -->
<path d="M1111.0,399.6 L1114.4,405.5 L1121.0,406.9 L1116.4,411.9 L1117.2,418.6 L1111.0,415.8 L1104.8,418.6 L1105.6,411.9 L1101.0,406.9 L1107.6,405.5 Z" fill="#fff" stroke="#6d6e6e" stroke-width="1.7" stroke-linejoin="round"/>
<path d="M1111.0,404.5 L1112.8,407.7 L1116.3,408.4 L1113.9,411.0 L1114.3,414.6 L1111.0,413.1 L1107.7,414.6 L1108.1,411.0 L1105.7,408.4 L1109.2,407.7 Z" fill="#6d6e6e" stroke="#6d6e6e" stroke-width="1.1" stroke-linejoin="round"/>
<!-- 14 heart trace -->
<rect x="1101" y="432.8" width="15.9" height="13.1" fill="#6d6e6e"/>
<path d="M1102.2,447 H1119 L1122.5,451.2 H1106.4 Z" fill="#6d6e6e"/>
<path d="M1113.3,447.6 C1110,444.6 1107.6,442.6 1107.6,440.2 C1107.6,438.4 1109,437.2 1110.5,437.2 C1111.7,437.2 1112.7,437.8 1113.3,438.8 C1113.9,437.8 1114.9,437.2 1116.1,437.2 C1117.6,437.2 1119,438.4 1119,440.2 C1119,442.6 1116.6,444.6 1113.3,447.6 Z" fill="#6d6e6e" stroke="#fff" stroke-width="1"/>
<!-- 15 dots -->
<g fill="#6d6e6e"><circle cx="1111" cy="465.9" r="1.75"/><circle cx="1101.5" cy="472.6" r="1.75"/><circle cx="1107.7" cy="471.1" r="1.75"/><circle cx="1114.2" cy="471.1" r="1.75"/><circle cx="1120.5" cy="472.6" r="1.75"/><circle cx="1105.6" cy="477.3" r="1.75"/><circle cx="1116.2" cy="477.3" r="1.75"/><circle cx="1110.8" cy="481.3" r="1.75"/><circle cx="1105.1" cy="483.6" r="1.75"/><circle cx="1116.6" cy="483.6" r="1.75"/></g>
<!-- 16 puzzle -->
<path d="M1107.1,501.2 L1110.4,498.9 L1112.3,501.5 L1113.2,502.4 L1115.0,500.9 L1116.8,500.0 L1118.9,502.0 L1118.0,504.1 L1116.5,505.6 L1120.1,508.3 L1117.7,511.8 L1115.0,509.6 L1112.9,509.9 L1112.0,512.0 L1114.1,514.7 L1111.3,516.8 L1109.2,513.8 L1107.4,512.9 L1106.2,514.7 L1104.1,516.2 L1102.6,514.4 L1103.5,512.6 L1105.6,510.8 L1105.3,509.3 L1101.9,507.7 L1103.8,505.0 L1105.6,506.8 L1107.7,507.1 L1109.5,505.0 L1109.2,502.9 Z" fill="#6d6e6e" stroke="#6d6e6e" stroke-width="0.8" stroke-linejoin="round"/>
<!-- 17 weld/knife hands -->
<rect x="1107.4" y="532.1" width="14.6" height="14.4" rx="1.7" fill="#6d6e6e"/>
<rect x="1100" y="535.3" width="14.4" height="14.4" rx="1.7" fill="#6d6e6e"/>
<path d="M1108,535 H1113.6 C1116.3,535 1116.3,538 1113.6,538 H1108.4 C1105.7,538 1105.7,541 1108.4,541 H1113.6 C1116.3,541 1116.3,544 1113.6,544 H1108.4 C1105.7,544 1105.7,547.1 1108.4,547.1 H1114" fill="none" stroke="#cdcdcd" stroke-width="1.1"/>
<!-- 18 sketch -->
<path d="M1105.3,565.5 L1102.6,570 L1110.7,565.5 L1103.2,576.1 L1117.7,566.1 L1104.7,580.9 L1119.5,571.5 L1111.7,581.5 L1118.6,577.6" fill="none" stroke="#6d6e6e" stroke-width="1.15" stroke-linecap="round" stroke-linejoin="round"/>
<!-- 19 grid circle -->
<circle cx="1111" cy="606.8" r="10" fill="#6d6e6e"/>
<path d="M1106.4,596 V618 M1115.6,596 V618 M1100,602.2 H1122 M1100,611.4 H1122" stroke="#fff" stroke-width="1.1" fill="none"/>
<!-- 20 3d pages -->
<path d="M1114.5,630.8 V627.8 L1102.5,634.3 V648.5 L1104.5,647.4" fill="none" stroke="#6d6e6e" stroke-width="1.55"/>
<path d="M1106.8,637.8 L1119.1,631.2 V645.1 L1106.8,651.6 Z" fill="none" stroke="#6d6e6e" stroke-width="1.55"/>
<path d="M1107.6,638.2 L1115.4,634 V642.2 L1107.6,646.4 Z" fill="#6d6e6e"/>
<!-- 21 warp grid -->
<path d="M1099.6,661.4 C1104,662 1109,666 1114,666.2 C1118,666.2 1121,663.5 1122.6,662 V684.3 C1120,682.5 1117,680.5 1113,680.5 C1108,680.5 1103,683 1099.6,684 Z M1107.5,664.4 V681.6 M1114.8,666.2 V680.6 M1099.6,668.8 C1104,668 1110,670.2 1114.8,670.3 C1118,670.3 1121,669.2 1122.6,668.6 M1099.6,676 C1104,674.6 1110,674.6 1114.8,675 C1118,675.3 1121,676.2 1122.6,676.8" fill="none" stroke="#6d6e6e" stroke-width="1.5"/>
<!-- 22 Ab -->
<path d="M1099.2,697 H1122.8 V714.4 H1099.2 Z M1111,697 V714.4" fill="none" stroke="#6d6e6e" stroke-width="1.4" stroke-dasharray="2.8,2.4"/>
<text x="1100.6" y="711.3" font-size="13.4" fill="#6d6e6e">A</text>
<text x="1114.6" y="711.3" font-size="13.4" fill="#6d6e6e">b</text>
<!-- 23 nesting -->
<path d="M1099.8,727 H1122.6 V749 C1120,751 1117,750.6 1113.5,748.8 C1110,746.8 1107,746.2 1104.5,747.2 C1102.5,748 1101,748.8 1099.8,749.4 Z" fill="none" stroke="#6d6e6e" stroke-width="1.4"/>
<rect x="1099.3" y="726.3" width="23.8" height="1.9" fill="#6d6e6e"/>
<path d="M1102.9,734.9 L1106.8,729.2 L1110.6,734.9 Z M1111.6,729.6 H1119.4 L1115.5,735.3 Z M1102.9,743.8 L1106.8,737.6 L1110.6,743.8 Z M1111.9,738.1 H1119.4 L1115.6,744.2 Z M1112.2,746.6 H1119.4 L1116.8,750 " fill="none" stroke="#6d6e6e" stroke-width="1.3"/>
</svg>
</body></html>
